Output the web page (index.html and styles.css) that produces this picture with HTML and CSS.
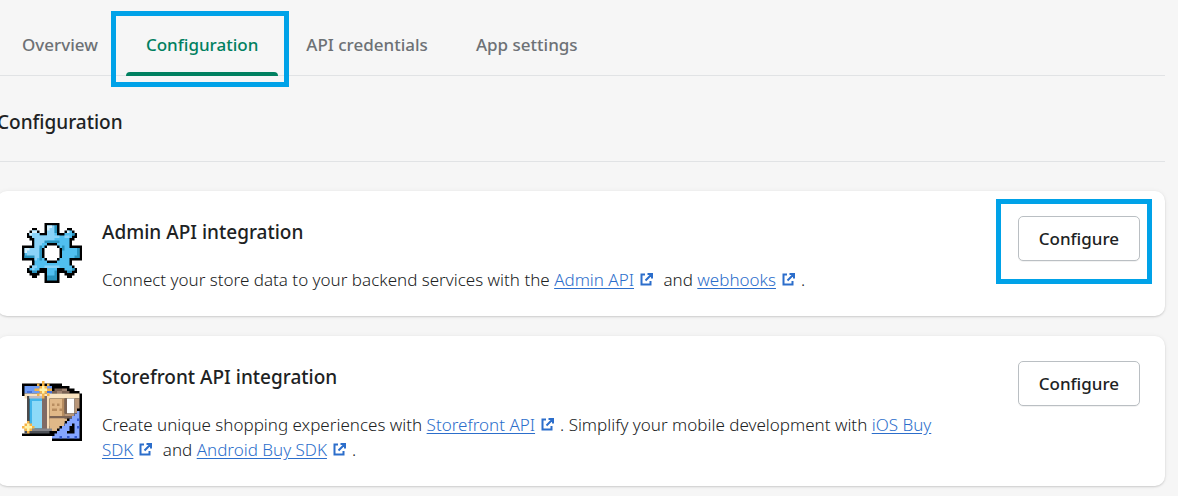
FILE: index.html
```html
<!DOCTYPE html>
<html lang="en">

<head>
    <meta charset="UTF-8">
    <meta name="viewport" content="width=device-width, initial-scale=1.0">
    <title>Configuration</title>
    <link rel="stylesheet" href="styles.css">
</head>

<body>
    <svg width="0" height="0" class="sprite" aria-hidden="true">
        <symbol id="external" viewBox="0 0 13 13">
            <path d="M5 1.5H1.5v10h9V8M7.5 1H12v4.500M11.500 1.500L5.500 7.500" fill="none" stroke="#2c6ecb" stroke-width="2" />
        </symbol>
    </svg>

    <nav class="tabs">
        <button class="tab">Overview</button>
        <button class="tab active">Configuration<span class="highlight"></span></button>
        <button class="tab">API credentials</button>
        <button class="tab">App settings</button>
    </nav>

    <main class="content">
        <h1>Configuration</h1>

        <section class="card">
            <svg class="icon" viewBox="0 0 24 24" aria-hidden="true">
                <path fill="#000" d="M9 0h6v4h2v-1h1v-1h2v1h1v1h1v2h-1v1h-1v2h4v6h-4v2h1v1h1v2h-1v1h-1v1h-2v-1h-1v-1h-2v4H9v-4H7v1H6v1H4v-1H3v-1H2v-2h1v-1h1v-2H0V9h4V7H3V6H2V4h1V3h1V2h2v1h1v1h2z" />
                <path fill="#50bff0" d="M10 1h4v4h3V4h1V3h2v1h1v1h-1v1h-1v4h4v4h-4v3h1v1h1v1h-1v1h-2v-1h-1v-1h-3v4h-4v-4H7v1H6v1H4v-1H3v-1h1v-1h1v-3H1v-4h4V6H4V5H3V4h1V3h2v1h1v1h3z" />
                <path fill="#8ad3f8" d="M10 1h3v4h2v1h-2v1h-3v1H8v2H7v4H6v1H5v-1H2v-4h3V6H4V5H3V4h1V3h2v1h1v1h3z" />
                <path fill="#d3effd" d="M10 1h2v1h-1v1h-1zM4 3h2v1H4zM3 4h1v1H3zM1 10h2v1H2v1H1zM18 3h1v1h-1z" />
                <path fill="#8ad3f8" d="M9 17h6v1H9zM4 17h2v1H5v1H4zM17 5h2v1h-2z" />
                <path fill="#2a93bd" d="M13 1h1v3h-1zM22 10h1v4h-2v-1h1zM10 22v-1h3v-2h1v4h-4zM20 17v1h1v1h-1v1h-2v-1h2zM4 20v-1h2v1zM20 4h1v1h-1zM9 7h6v1H9zM7 9h1v6H7zM16 9h1v2h-1zM1 13h4v1H1z" />
                <path fill="#000" d="M10 8h4v1h1v1h1v4h-1v1h-1v1h-4v-1H9v-1H8v-4h1V9h1z" />
                <path fill="#fff" d="M10 9h4v1h1v4h-1v1h-4v-1H9v-4h1z" />
            </svg>
            <div class="info">
                <h2>Admin API integration</h2>
                <p>Connect your store data to your backend services with the
                    <a href="#">Admin API</a><svg class="ext"><use href="#external" /></svg> and
                    <a href="#">webhooks</a><svg class="ext"><use href="#external" /></svg>.</p>
            </div>
            <button class="btn">Configure<span class="highlight"></span></button>
        </section>

        <section class="card">
            <svg class="icon" viewBox="0 0 24 24" aria-hidden="true">
                <path fill="#000" d="M0 1h16v1h3v1h2v1h2v1h1v18H12v-1H0v-1h2V6H0z" />
                <path fill="#6f9cf5" d="M1 2h11v3H1z" />
                <path fill="#4674dc" d="M7 2h1v3H7zM2 4h2v1H2zM10 4h2v1h-2z" />
                <path fill="#7b6354" d="M13 3h3v1h3v1h-7V4h1z" />
                <path fill="#a08472" d="M16 3h2v1h-2zM14 4h2v1h-2z" />
                <path fill="#f9e3c0" d="M1 5h22v2H1z" />
                <path fill="#4d4a4b" d="M2 6h1v14H2z" />
                <path fill="#42b5ea" d="M3 6h6v13H3z" />
                <path fill="#8ddaf8" d="M4 8h4v11H4z" />
                <path fill="#c3bcc1" d="M3 6h6v1H3z" />
                <path fill="#806b65" d="M8 6h2v14H8z" />
                <path fill="#f9dfba" d="M10 5h1v15h-1z" />
                <path fill="#e0b888" d="M11 7h6v11h-6z" />
                <path fill="#b88d60" d="M12 9h1v1h-1zM14 9h1v1h-1zM12 11h2v1h-2zM15 11h1v1h-1zM12 16h2v1h-2zM16 7h1v7h-1z" />
                <path fill="#7b6354" d="M11 14h9v1h-9zM17 7h1v6h-1z" />
                <path fill="#e0b888" d="M11 15h7v1h-1v1h-1v1h-1v1h-1v1h-3z" />
                <path fill="#fff" d="M18 7h3v6h-3z" />
                <path fill="#b89678" d="M21 7h2v5h-1v1h-1zM17 13h4v1h-4z" />
                <path fill="#85868b" d="M1 19h11v1H1z" />
                <path fill="#4d5157" d="M1 20h10v1H1z" />
                <path fill="#000" d="M22 11h2v13H12v-2h1v-1h1v-1h1v-1h1v-1h1v-1h1v-1h1v-1h1v-1h1v-1h1z" />
                <path fill="#84a5ff" d="M22 12h1v11H12v-1h1v-1h1v-1h1v-1h1v-1h1v-1h1v-1h1v-1h1v-1h1v-1h1z" />
                <path fill="#3358cc" d="M22 15h1v1h-1zM22 18h1v1h-1zM15 22h1v1h-1zM18 22h1v1h-1zM21 22h1v1h-1z" />
                <path fill="#000" d="M20 17h1v4h-3v-1h1v-2h1z" />
                <path fill="#f6b447" d="M8 0h1v2h1v1h2v1h-2v1H9v2H8V5H7V4H5V3h2V2h1zM6 1h1v1H6zM10 1h1v1h-1zM6 5h1v1H6zM10 5h1v1h-1zM2 16h1v2h2v1H3v2H2v-2H0v-1h2zM1 17h1v1H1zM3 17h1v1H3zM1 19h1v1H1zM3 19h1v1H3z" />
                <path fill="#fff4ac" d="M8 2h1v1h1v1H9v1H8V4H7V3h1zM2 17h1v1h1v1H3v1H2v-1H1v-1h1z" />
            </svg>
            <div class="info">
                <h2>Storefront API integration</h2>
                <p>Create unique shopping experiences with
                    <a href="#">Storefront API</a><svg class="ext"><use href="#external" /></svg>. Simplify your mobile development with
                    <a href="#">iOS Buy SDK</a><svg class="ext"><use href="#external" /></svg> and
                    <a href="#">Android Buy SDK</a><svg class="ext"><use href="#external" /></svg>.</p>
            </div>
            <button class="btn">Configure</button>
        </section>
    </main>
</body>

</html>
```
FILE: styles.css
```css
body {
    font-family: "Noto Sans", "Open Sans", sans-serif;
    font-size: 17px;
    line-height: 25px;
    color: #202223;
    background-color: #f6f6f6;
    margin: 0;
    overflow-x: hidden;
}

h1,
h2,
p {
    margin: 0;
}

h1,
h2 {
    font-size: 19px;
    font-weight: 500;
}

p {
    font-weight: 300;
}

button {
    font-family: inherit;
    font-size: 17px;
    font-weight: 500;
    line-height: 25px;
    cursor: pointer;
}

.sprite {
    position: absolute;
}

.tabs {
    display: flex;
    gap: 8px;
    margin-right: 13px;
    padding-left: 2px;
    border-bottom: 1px solid #e1e3e5;
}

.tab {
    position: relative;
    padding: 32px 20px 18px;
    border: none;
    background: none;
    color: #6d7175;
}

.tab.active {
    color: #008060;
}

.tab.active::after {
    content: "";
    position: absolute;
    left: 0;
    right: 0;
    bottom: -1px;
    height: 4px;
    border-radius: 4px 4px 0 0;
    background-color: #008060;
}

.highlight {
    position: absolute;
    border: 5px solid #00a2e8;
}

.tab .highlight {
    top: 11px;
    right: -11px;
    bottom: -12px;
    left: -15px;
}

.btn .highlight {
    top: -18px;
    right: -13px;
    bottom: -24px;
    left: -23px;
}

.content {
    margin: 0 13px 0 -3px;
}

h1 {
    margin-bottom: 29px;
    padding: 34px 0 26px;
    border-bottom: 1px solid #e1e3e5;
}

.card {
    display: flex;
    align-items: center;
    margin-bottom: 20px;
    padding: 25px 25px 24px;
    border-radius: 10px;
    background-color: #fff;
    box-shadow: 0 0 5px rgba(23, 24, 24, 0.05), 0 1px 2px rgba(0, 0, 0, 0.15);
}

.icon {
    flex: none;
    width: 60px;
    height: 60px;
    margin: 0 20px 2px 0;
}

.info {
    flex: 1;
    padding-top: 4px;
}

h2 {
    margin-bottom: 22px;
}

a {
    color: #2c6ecb;
    text-decoration: underline;
    text-underline-offset: 2px;
}

.ext {
    width: 13px;
    height: 13px;
    margin: 0 6px;
}

.btn {
    position: relative;
    align-self: flex-start;
    flex: none;
    margin-left: 60px;
    padding: 9px 20px;
    border: 1px solid #babfc3;
    border-radius: 5px;
    background-color: #fff;
    color: #202223;
    box-shadow: 0 1px 0 rgba(0, 0, 0, 0.05);
}
```
